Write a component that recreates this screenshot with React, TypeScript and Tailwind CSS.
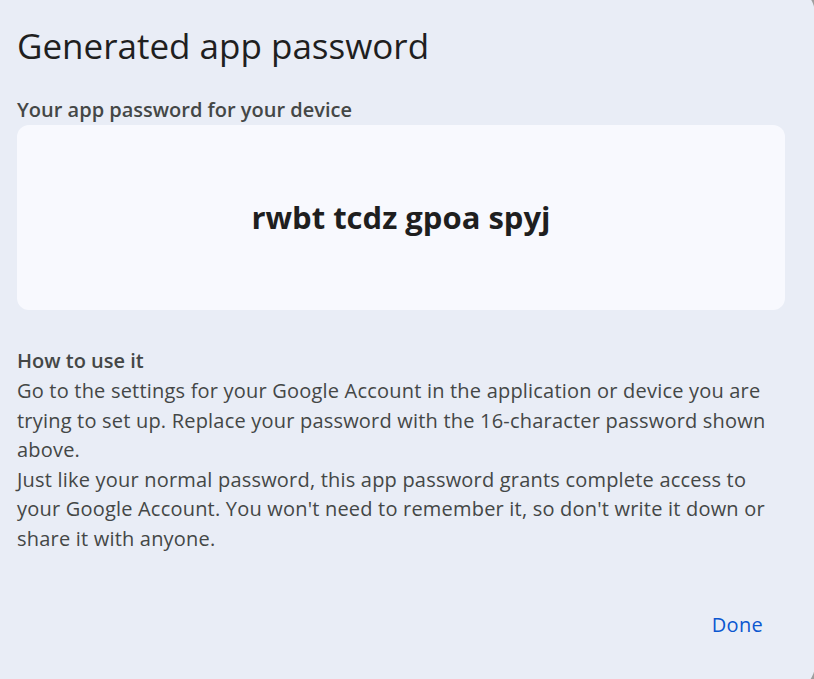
import React from "react";

export default function App() {
  return (
    <div className="w-[814px] h-[679px] overflow-hidden bg-[#9e9e9e]" style={{ fontFamily: '"Open Sans", Roboto, sans-serif' }}>
      <div className="-ml-[7px] -mt-[14px] w-[822px] h-[706px] rounded-[28px] bg-[#e9edf6] pl-[24px] pr-[30px] flex flex-col">
        <h1 className="mt-[38px] text-[35px] leading-[44px] text-[#1f1f1f] font-normal">Generated app password</h1>
        <div className="mt-[29px] text-[20px] leading-[26px] font-semibold text-[#444746]">Your app password for your device</div>
        <div className="mt-[2px] h-[185px] rounded-[12px] bg-[#f8f9fe] flex items-center justify-center">
          <span className="text-[31px] font-bold text-[#1f1f1f]">rwbt tcdz gpoa spyj</span>
        </div>
        <div className="mt-[36px] text-[20px] leading-[29px] font-semibold text-[#444746]">How to use it</div>
        <div className="mt-[1px] text-[20px] leading-[29.6px] tracking-[0.2px] text-[#444746]">
          <p>Go to the settings for your Google Account in the application or device you are trying to set up. Replace your password with the 16-character password shown above.</p>
          <p>Just like your normal password, this app password grants complete access to your Google Account. You won't need to remember it, so don't write it down or share it with anyone.</p>
        </div>
        <div className="mt-[57px] flex justify-end pr-[22px]">
          <button className="text-[20px] leading-[28px] font-medium tracking-[0.3px] text-[#0b57d0]">Done</button>
        </div>
      </div>
    </div>
  );
}
